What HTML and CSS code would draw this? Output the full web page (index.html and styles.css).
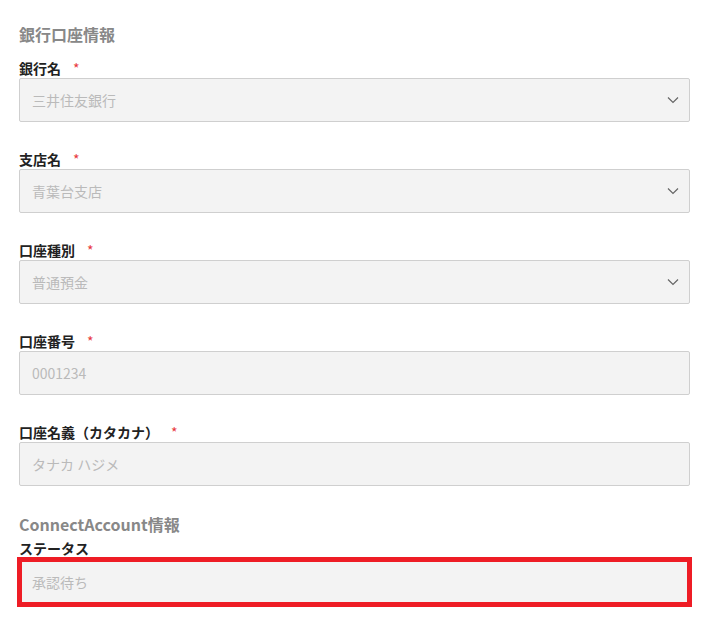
FILE: index.html
```html
<!DOCTYPE html>
<html lang="ja">
<head>
    <meta charset="UTF-8">
    <title>口座情報</title>
    <link rel="stylesheet" href="styles.css">
</head>
<body>
    <div class="page">
        <!-- 銀行口座 -->
        <h3 class="section-title first">銀行口座情報</h3>

        <div class="field">
            <label class="field-label">銀行名<span class="req">*</span></label>
            <div class="field-box select">
                <span class="value">三井住友銀行</span>
                <svg class="chevron" width="12" height="8" viewBox="0 0 12 8"><path d="M1 1.5 L6 6.5 L11 1.5" fill="none" stroke="#666" stroke-width="1.2"/></svg>
            </div>
        </div>

        <div class="field">
            <label class="field-label">支店名<span class="req">*</span></label>
            <div class="field-box select">
                <span class="value">青葉台支店</span>
                <svg class="chevron" width="12" height="8" viewBox="0 0 12 8"><path d="M1 1.5 L6 6.5 L11 1.5" fill="none" stroke="#666" stroke-width="1.2"/></svg>
            </div>
        </div>

        <div class="field">
            <label class="field-label">口座種別<span class="req">*</span></label>
            <div class="field-box select">
                <span class="value">普通預金</span>
                <svg class="chevron" width="12" height="8" viewBox="0 0 12 8"><path d="M1 1.5 L6 6.5 L11 1.5" fill="none" stroke="#666" stroke-width="1.2"/></svg>
            </div>
        </div>

        <div class="field">
            <label class="field-label">口座番号<span class="req">*</span></label>
            <div class="field-box">
                <span class="value">0001234</span>
            </div>
        </div>

        <div class="field">
            <label class="field-label">口座名義（カタカナ）<span class="req">*</span></label>
            <div class="field-box">
                <span class="value">タナカ ハジメ</span>
            </div>
        </div>

        <!-- Stripe Connect -->
        <h3 class="section-title">ConnectAccount情報</h3>

        <div class="field">
            <label class="field-label">ステータス</label>
            <div class="field-box highlight">
                <span class="value">承認待ち</span>
            </div>
        </div>
    </div>
</body>
</html>
```

FILE: styles.css
```css
body {
    margin: 0;
    background: #fff;
    font-family: "Noto Sans CJK JP", "Noto Sans", sans-serif;
    color: #222;
}

.page {
    width: 671px;
    padding: 23px 0 0 19px;
}

.section-title {
    margin: 0 0 3px;
    font-size: 16px;
    line-height: 22px;
    font-weight: bold;
    color: #888;
}

.section-title.first {
    margin-bottom: 13px;
}

.field {
    margin-bottom: 27px;
}

.field-label {
    display: block;
    font-size: 14px;
    line-height: 20px;
    font-weight: bold;
    color: #222;
}

.req {
    color: #e8383d;
    font-weight: normal;
    margin-left: 12px;
}

.field-box {
    box-sizing: border-box;
    height: 44px;
    border: 1px solid #cfcfcf;
    border-radius: 2px;
    background: #f3f3f3;
    padding: 0 10px 0 12px;
    display: flex;
    align-items: center;
    justify-content: space-between;
    font-size: 14px;
}

.value {
    color: #bababa;
}

.chevron {
    display: block;
}

/* 注目枠 */
.highlight {
    height: 46px;
    margin-top: 1px;
    border-radius: 0;
    outline: 5px solid #ee1c25;
    outline-offset: -3px;
}
```
